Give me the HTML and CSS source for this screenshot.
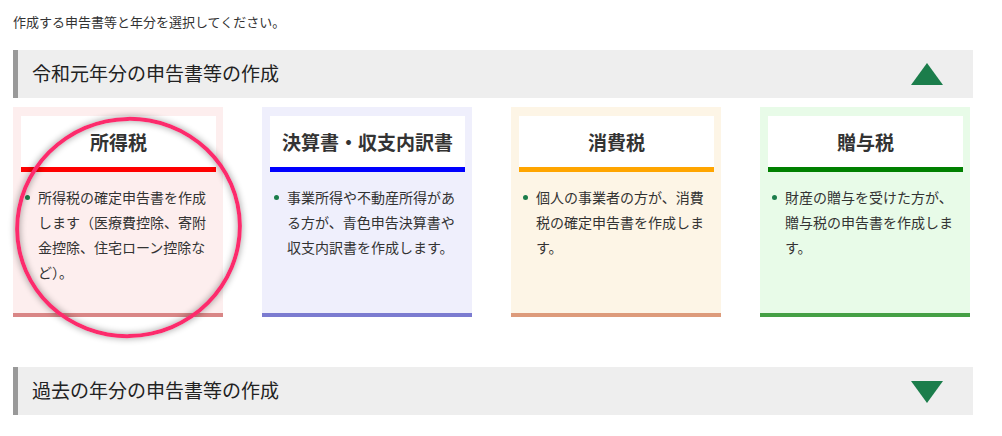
FILE: index.html
```html
<!DOCTYPE html>
<html lang="ja">
<head>
<meta charset="utf-8">
<title>申告書等の作成</title>
<link rel="stylesheet" href="styles.css">
</head>
<body>
<div class="page">
  <p class="intro">作成する申告書等と年分を選択してください。</p>

  <div class="section-head">
    <h2 class="section-title">令和元年分の申告書等の作成</h2>
    <span class="tri tri-up"></span>
  </div>

  <div class="cards">
    <div class="card card-income">
      <div class="card-head"><h3>所得税</h3></div>
      <ul class="card-list">
        <li>所得税の確定申告書を作成します（医療費控除、寄附金控除、住宅ローン控除など）。</li>
      </ul>
      <span class="ring"></span>
    </div>
    <div class="card card-settle">
      <div class="card-head"><h3>決算書・収支内訳書</h3></div>
      <ul class="card-list">
        <li>事業所得や不動産所得がある方が、青色申告決算書や収支内訳書を作成します。</li>
      </ul>
    </div>
    <div class="card card-consume">
      <div class="card-head"><h3>消費税</h3></div>
      <ul class="card-list">
        <li>個人の事業者の方が、消費税の確定申告書を作成します。</li>
      </ul>
    </div>
    <div class="card card-gift">
      <div class="card-head"><h3>贈与税</h3></div>
      <ul class="card-list">
        <li>財産の贈与を受けた方が、贈与税の申告書を作成します。</li>
      </ul>
    </div>
  </div>

  <div class="section-head section-past">
    <h2 class="section-title">過去の年分の申告書等の作成</h2>
    <span class="tri tri-down"></span>
  </div>
</div>
</body>
</html>
```

FILE: styles.css
```css
* { box-sizing: border-box; }
html, body { margin: 0; padding: 0; background: #fff; }
body {
  font-family: "Noto Sans CJK JP", "Noto Sans", sans-serif;
  color: #333;
}
.page {
  width: 960px;
  margin-left: 13px;
}
.intro {
  margin: 0;
  padding-top: 12px;
  font-size: 13px;
  line-height: 20px;
  height: 50px;
}
.section-head {
  height: 48px;
  background: #eeeeee;
  border-left: 5px solid #999;
  display: flex;
  align-items: center;
  justify-content: space-between;
  padding-left: 14px;
  padding-right: 30px;
}
.section-title {
  margin: 0 0 3px;
  font-size: 19px;
  font-weight: normal;
  color: #222;
  line-height: 1;
}
.tri {
  width: 0;
  height: 0;
  border-left: 16px solid transparent;
  border-right: 16px solid transparent;
}
.tri-up { border-bottom: 22px solid #1b7d4b; margin-bottom: 1px; }
.tri-down { border-top: 22px solid #1b7d4b; margin-top: 1px; }

.cards {
  display: flex;
  gap: 39px;
  padding-top: 9px;
}
.card {
  position: relative;
  flex: 0 0 210px;
  height: 210px;
  padding: 9px 7px 0 8px;
  border-bottom: 4px solid;
}
.card-head {
  height: 56px;
  background: #fff;
  border-bottom: 5px solid;
  display: flex;
  align-items: center;
  justify-content: center;
}
.card-head h3 {
  margin: 0;
  font-size: 19px;
  font-weight: bold;
  color: #333;
  line-height: 1;
}
.card-list {
  list-style: none;
  margin: 13px 0 0;
  padding: 0 0 0 17px;
  font-size: 14px;
  line-height: 25px;
  color: #333;
}
.card-list li { position: relative; }
.card-list li::before {
  content: "";
  position: absolute;
  left: -13px;
  top: 10px;
  width: 5px;
  height: 5px;
  border-radius: 50%;
  background: #1b7d4b;
}

.card-income { background: #fdeeee; border-bottom-color: #d98686; }
.card-income .card-head { border-bottom-color: #ff0000; }
.card-settle { background: #efeffc; border-bottom-color: #7b7bd0; }
.card-settle .card-head { border-bottom-color: #0000ff; }
.card-consume { background: #fdf5e6; border-bottom-color: #dd9b7b; }
.card-consume .card-head { border-bottom-color: #ffa500; }
.card-gift { background: #e8fbe8; border-bottom-color: #45a045; }
.card-gift .card-head { border-bottom-color: #008000; }

.ring {
  position: absolute;
  left: 2px;
  top: 10px;
  width: 227px;
  height: 221px;
  border: 4px solid #fc2b6c;
  border-radius: 50%;
  transform: rotate(-12deg);
  box-shadow: 0 0 6px 1px rgba(0,0,0,0.3), inset 0 0 6px 1px rgba(0,0,0,0.3);
  pointer-events: none;
}

.section-past { margin-top: 50px; }
```
